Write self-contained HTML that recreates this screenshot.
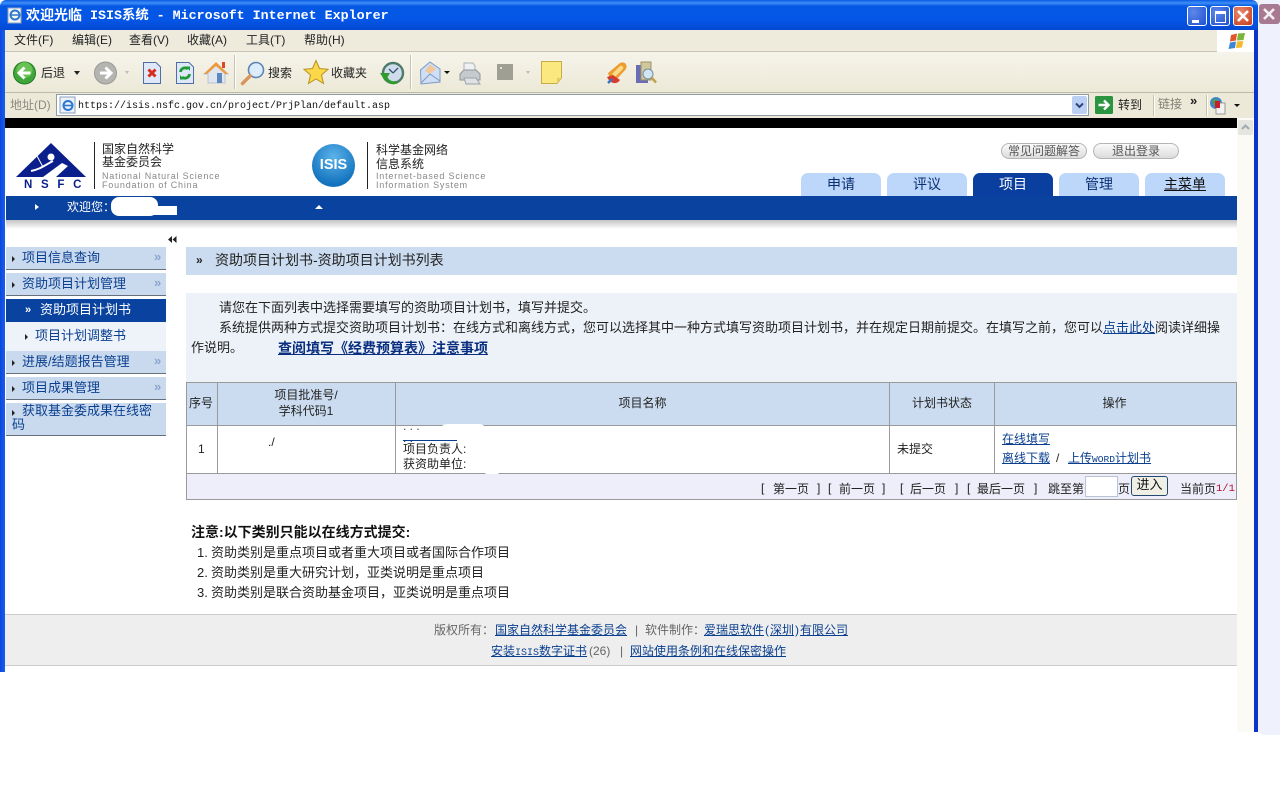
<!DOCTYPE html>
<html lang="zh"><head><meta charset="utf-8"><title>欢迎光临 ISIS系统</title>
<style>
html,body{margin:0;padding:0;width:1280px;height:800px;overflow:hidden;background:#fff}
body{position:relative;font-family:"Liberation Sans","WenQuanYi Zen Hei","Noto Sans CJK SC",sans-serif;font-size:13px;color:#222}
.a,.t{position:absolute}
.t{white-space:nowrap;line-height:16px}
a{color:#0a3f8f;text-decoration:underline}
.s{font-size:12px}
.m{font-family:"Liberation Mono",monospace;font-size:10px}
.p{display:inline-block;width:6px;text-align:center}
.side{position:absolute;left:6px;width:160px;background:#c9daee;border-bottom:1px solid #66707c;box-sizing:border-box;color:#0b3f90}
.side .t{color:#0b3f90}
.dbl{position:absolute;left:148px;color:#8aa6cc;font-size:13px;line-height:13px;font-weight:bold}
.tab{position:absolute;top:173px;width:80px;height:23px;background:#bdd7fb;border-radius:7px 7px 0 0;text-align:center;font-size:14px;line-height:23px;color:#0a2f70}
.c{position:absolute;background:#9a9a9a}
.pill{position:absolute;top:143px;width:86px;height:16px;border:1px solid #b5b5b5;border-radius:8px;box-sizing:border-box;background:linear-gradient(#fafafa,#dcdcdc);color:#555;font-size:12px;line-height:14px;text-align:center}
.gr{color:#888;font-size:9px;letter-spacing:.8px;line-height:9px}
.tri{position:absolute;width:0;height:0;border-style:solid;border-color:transparent}
.sep{position:absolute;width:1px;background:#c5c2b0;border-right:1px solid #fff}
</style></head><body>

<!-- right ghost area -->
<div class="a" style="left:1257px;top:0;width:23px;height:735px;background:#eff1fc"></div>
<div class="a" style="left:1259px;top:4px;width:21px;height:20px;background:#a87a92;border-radius:3px"></div>
<svg class="a" style="left:1259px;top:4px" width="21" height="20"><path d="M5 5L15 15M15 5L5 15" stroke="#f4eef2" stroke-width="2.6"/></svg>
<svg class="a" style="left:1240px;top:722px" width="40" height="30"><path d="M0 0L18 10L40 22V30H0Z" fill="#fff"/></svg>

<!-- window frame -->
<div class="a" style="left:0;top:0;width:1258px;height:30px;border-radius:6px 6px 0 0;background:linear-gradient(#0a5ae6 0,#3d8ff7 3px,#0458e4 6px,#0556e6 20px,#0348d2 30px)"></div>
<div class="a" style="left:0;top:30px;width:5px;height:642px;background:linear-gradient(90deg,#0a48dc,#1a5ef0)"></div>
<div class="a" style="left:1254px;top:30px;width:4px;height:702px;background:#0a35c8"></div>

<!-- title -->
<svg class="a" style="left:7px;top:7px" width="16" height="17"><rect x="1" y="1" width="13" height="15" fill="#f4f4f4" stroke="#8fa4bf"/><circle cx="8" cy="8" r="4.5" fill="none" stroke="#2e78cc" stroke-width="2"/><path d="M4 8h8" stroke="#2e78cc" stroke-width="1.5"/></svg>
<div class="t" style="left:26px;top:9px;color:#fff;font-size:14px;font-weight:bold;font-family:'Liberation Mono','WenQuanYi Zen Hei','Noto Sans CJK SC',monospace">欢迎光临&nbsp;</div>
<div class="t" style="left:90px;top:9px;color:#fff;font-size:13.33px;font-weight:bold;font-family:'Liberation Mono','WenQuanYi Zen Hei','Noto Sans CJK SC',monospace">ISIS系统 - Microsoft Internet Explorer</div>

<!-- window buttons -->
<div class="a" style="left:1187px;top:6px;width:18px;height:18px;border:1px solid #fff;border-radius:3px;background:radial-gradient(circle at 30% 30%,#5c88ea,#2050cf)"></div>
<div class="a" style="left:1192px;top:20px;width:7px;height:3px;background:#fff"></div>
<div class="a" style="left:1210px;top:6px;width:18px;height:18px;border:1px solid #fff;border-radius:3px;background:radial-gradient(circle at 30% 30%,#5c88ea,#2050cf)"></div>
<div class="a" style="left:1215px;top:11px;width:9px;height:8px;border:1px solid #fff;border-top:3px solid #fff"></div>
<div class="a" style="left:1233px;top:6px;width:18px;height:18px;border:1px solid #fff;border-radius:3px;background:radial-gradient(circle at 35% 30%,#e98a6e,#c7391a)"></div>
<svg class="a" style="left:1233px;top:6px" width="20" height="20"><path d="M5 5L15 15M15 5L5 15" stroke="#fff" stroke-width="2.6"/></svg>

<!-- menu bar -->
<div class="a" style="left:5px;top:30px;width:1249px;height:22px;background:#eeebdd;border-bottom:1px solid #c8c5b4;box-sizing:border-box"></div>
<div class="t s" style="left:14px;top:32px">文件(F)</div>
<div class="t s" style="left:72px;top:32px">编辑(E)</div>
<div class="t s" style="left:129px;top:32px">查看(V)</div>
<div class="t s" style="left:187px;top:32px">收藏(A)</div>
<div class="t s" style="left:246px;top:32px">工具(T)</div>
<div class="t s" style="left:304px;top:32px">帮助(H)</div>
<div class="a" style="left:1217px;top:30px;width:37px;height:22px;background:#fff"></div>
<svg class="a" style="left:1227px;top:31px" width="20" height="20"><path d="M4 4L10 2.5L9 9.5L3 10.5Z" fill="#e2552b"/><path d="M11 2.5L18 2L16.5 9L10 9.5Z" fill="#7cb53a"/><path d="M3 11.5L9 10.5L8 17L1.500 18Z" fill="#3d86d6"/><path d="M10 10.500L16.300 10L15 16.500L9 17Z" fill="#f3bb2c"/></svg>

<!-- toolbar -->
<div class="a" style="left:5px;top:52px;width:1249px;height:41px;background:linear-gradient(#f6f4ea,#ece9d8);border-bottom:1px solid #bdbaa9;box-sizing:border-box"></div>
<svg class="a" style="left:12px;top:60px" width="26" height="26"><circle cx="12.500" cy="13" r="11" fill="#3fa63a" stroke="#1e7a24"/><circle cx="12.500" cy="10" r="8" fill="#8ad86a" opacity=".55"/><path d="M18.500 13H8M12.500 7.500L7 13L12.500 18.500" fill="none" stroke="#fff" stroke-width="3"/></svg>
<div class="t s" style="left:41px;top:65px">后退</div>
<div class="tri" style="left:74px;top:71px;border-width:4px 3.500px 0;border-top-color:#222"></div>
<svg class="a" style="left:93px;top:60px" width="26" height="26"><circle cx="12.500" cy="13" r="11" fill="#b4b4b0" stroke="#9a9a96"/><path d="M7 13H17.500M12.500 7.500L18 13L12.500 18.500" fill="none" stroke="#fff" stroke-width="3"/></svg>
<div class="tri" style="left:125px;top:71px;border-width:3px 2.500px 0;border-top-color:#bbb"></div>
<svg class="a" style="left:142px;top:61px" width="20" height="24"><path d="M1.500 1.500H14L18.500 6V22.500H1.500Z" fill="#dfe8f8" stroke="#4f6ea8"/><path d="M6.500 8.500L13.500 15.500M13.500 8.500L6.500 15.500" stroke="#d92a20" stroke-width="3"/></svg>
<svg class="a" style="left:175px;top:61px" width="20" height="24"><path d="M1.500 1.500H14L18.500 6V22.500H1.500Z" fill="#dfe8f8" stroke="#4f6ea8"/><path d="M5.500 11A4.500 4.500 0 0 1 13 8M14.500 13A4.500 4.500 0 0 1 7 16" fill="none" stroke="#1f9a36" stroke-width="2.800"/><path d="M11 5.500L15 5.500V10ZM9 18.500L5 18.500V14Z" fill="#1f9a36"/></svg>
<svg class="a" style="left:203px;top:59px" width="26" height="26"><path d="M13 4L25 15H22V24H5V15H1Z" fill="#dfe6ef" stroke="#b9c3d0"/><path d="M1 15L13 3L25 15L22 15L13 7L4 15Z" fill="#ec9a3c"/><rect x="14" y="14" width="5" height="10" fill="#5b88c0"/><rect x="19" y="3" width="3" height="6" fill="#d9482b"/></svg>
<div class="sep" style="left:234px;top:55px;height:34px"></div>
<svg class="a" style="left:240px;top:60px" width="26" height="26"><circle cx="16" cy="10" r="7.500" fill="#dcecfb" stroke="#5d86b8" stroke-width="1.600"/><path d="M10 16L2.500 23.500" stroke="#d8975a" stroke-width="3.500" stroke-linecap="round"/></svg>
<div class="t s" style="left:268px;top:65px">搜索</div>
<svg class="a" style="left:303px;top:59px" width="26" height="26"><path d="M13 1.500L16.500 9.500L25 10.300L18.500 16L20.500 24.500L13 20L5.500 24.500L7.500 16L1 10.300L9.500 9.500Z" fill="#fbd84a" stroke="#b89220"/></svg>
<div class="t s" style="left:331px;top:65px">收藏夹</div>
<svg class="a" style="left:379px;top:60px" width="26" height="26"><circle cx="14" cy="13" r="10" fill="#cfdcec" stroke="#4d7a6c" stroke-width="2.400"/><path d="M14 13L19 8M14 13L10 9" stroke="#38506e" stroke-width="1.300"/><path d="M1 13L11 13L6 21Z" fill="#2f9a2e"/><path d="M7 17A8 8 0 0 0 18 22" fill="none" stroke="#2f9a2e" stroke-width="3"/></svg>
<div class="sep" style="left:410px;top:55px;height:34px"></div>
<svg class="a" style="left:419px;top:60px" width="24" height="25"><path d="M1.500 10L11 2L21 9V22L2 24Z" fill="#cfdef5" stroke="#7c9ac4"/><path d="M6 11L11 4.500L17 9L11 14Z" fill="#f2c89a"/><path d="M2 23L11 14L21 21" fill="none" stroke="#7c9ac4"/></svg>
<div class="tri" style="left:444px;top:71px;border-width:3.500px 3px 0;border-top-color:#111"></div>
<svg class="a" style="left:458px;top:60px" width="24" height="26"><path d="M6 3H15L17 6V11H6Z" fill="#eef0f2" stroke="#aab2b8"/><path d="M2 14L6 10H18L22 14V20H2Z" fill="#c6cacc" stroke="#8e969c"/><path d="M6 18L18 18L22 24H8Z" fill="#dfe2e4" stroke="#9aa2a8"/></svg>
<div class="a" style="left:497px;top:64px;width:16px;height:16px;background:#a09f94"></div>
<div class="a" style="left:500px;top:67px;width:2px;height:2px;background:#e5e3d8"></div>
<div class="tri" style="left:526px;top:71px;border-width:3px 2.500px 0;border-top-color:#bbb"></div>
<svg class="a" style="left:540px;top:60px" width="24" height="25"><path d="M1.500 1.500H21.500V18L17 23.500H1.500Z" fill="#fbe97f" stroke="#c9a94a"/><path d="M17 23.500V18H21.500Z" fill="#e8cc60"/></svg>
<svg class="a" style="left:605px;top:60px" width="24" height="26"><path d="M3 13L15 3C19 1 23 4 21 9L11 20L5 19Z" fill="#ef9c2f"/><path d="M7 14L15 6C17 5 19 7 18 9L10 17Z" fill="#f9dc8a"/><path d="M2 17C5 24 12 25 15 20L8 15Z" fill="#d63c2e"/><path d="M3 23L7 19" stroke="#3b72c4" stroke-width="2.500"/></svg>
<svg class="a" style="left:634px;top:60px" width="24" height="26"><rect x="2" y="5" width="12" height="18" fill="#6a6cb4"/><rect x="7" y="2" width="10" height="18" fill="#d0c79a" stroke="#9a9270"/><circle cx="14" cy="14" r="5" fill="#cfe6f5" stroke="#7a8a9a"/><path d="M17.500 17.500L22 22.500" stroke="#c2a24a" stroke-width="2.500"/></svg>

<!-- address bar -->
<div class="a" style="left:5px;top:93px;width:1249px;height:25px;background:#ece9d8"></div>
<div class="t s" style="left:10px;top:97px;color:#8c8a80">地址(D)</div>
<div class="a" style="left:56px;top:94px;width:1033px;height:22px;background:#fff;border:1px solid #8e9ca8;box-sizing:border-box"></div>
<svg class="a" style="left:59px;top:96px" width="18" height="18"><rect x="1" y="1" width="15" height="16" fill="#eaf1fa" stroke="#88a0c0"/><circle cx="9" cy="9.500" r="4.500" fill="none" stroke="#2c78d0" stroke-width="2"/><path d="M5 9.500h8" stroke="#2c78d0" stroke-width="1.600"/></svg>
<div class="t" style="left:78px;top:99px;font-family:'Liberation Mono',monospace;font-size:10px;color:#111">https://isis.nsfc.gov.cn/project/PrjPlan/default.asp</div>
<div class="a" style="left:1072px;top:96px;width:15px;height:18px;background:#bcd0f4;border-radius:2px"></div>
<svg class="a" style="left:1072px;top:96px" width="15" height="18"><path d="M4 7.500L7.500 11L11 7.500" fill="none" stroke="#30467a" stroke-width="2"/></svg>
<svg class="a" style="left:1095px;top:96px" width="18" height="18"><rect width="18" height="18" rx="1.500" fill="#2a9440"/><path d="M3.500 9H13M9 4.500L13.500 9L9 13.500" fill="none" stroke="#fff" stroke-width="2.400"/></svg>
<div class="t s" style="left:1118px;top:97px">转到</div>
<div class="sep" style="left:1153px;top:95px;height:21px"></div>
<div class="t s" style="left:1158px;top:96px;color:#807e74">链接</div>
<div class="t" style="left:1190px;top:93px;font-size:13px;font-weight:bold;color:#222">»</div>
<div class="sep" style="left:1206px;top:95px;height:21px"></div>
<svg class="a" style="left:1209px;top:96px" width="20" height="20"><circle cx="7" cy="7" r="6" fill="#3f86c8"/><path d="M3 4L8 3L9 8L5 10Z" fill="#4f9e50"/><rect x="7" y="7" width="9" height="11" fill="#f2f2f2" stroke="#999"/><rect x="6" y="5" width="5" height="7" fill="#c8202a"/></svg>
<div class="tri" style="left:1234px;top:104px;border-width:3.500px 3px 0;border-top-color:#111"></div>

<!-- black bar -->
<div class="a" style="left:5px;top:118px;width:1232px;height:10px;background:#000"></div>

<!-- scrollbar -->
<div class="a" style="left:1237px;top:118px;width:17px;height:614px;background:#fbfaf4"></div>
<div class="a" style="left:1238px;top:120px;width:15px;height:15px;background:#e6e6e0;border-radius:2px"></div>
<svg class="a" style="left:1238px;top:120px" width="15" height="15"><path d="M4 9L7.500 5.500L11 9" fill="none" stroke="#a0a8b0" stroke-width="2"/></svg>

<!-- header -->
<svg class="a" style="left:14px;top:141px" width="74" height="38"><path d="M37 2L72 36H2Z" fill="#0a1f8c"/><path d="M17 30C27 28 31 24 39 20" fill="none" stroke="#fff" stroke-width="2"/><circle cx="37" cy="16" r="3.500" fill="#fff"/><path d="M29 36L48 22L54 25L42 36Z" fill="#fff"/><path d="M23 15L29 26" stroke="#fff" stroke-width="1"/></svg>
<div class="t" style="left:24px;top:177px;font-size:11.500px;font-weight:bold;color:#0a1f8c;letter-spacing:8.700px">NSFC</div>
<div class="a" style="left:94px;top:142px;width:1px;height:47px;background:#222"></div>
<div class="t s" style="left:102px;top:141px">国家自然科学</div>
<div class="t s" style="left:102px;top:154px">基金委员会</div>
<div class="t gr" style="left:102px;top:172px">National Natural Science</div>
<div class="t gr" style="left:102px;top:181px">Foundation of China</div>
<div class="a" style="left:312px;top:144px;width:43px;height:43px;border-radius:50%;background:radial-gradient(circle at 50% 30%,#5cb2ea,#1272bd 75%)"></div>
<div class="t" style="left:312px;top:157px;width:43px;text-align:center;color:#fff;font-weight:bold;font-size:14.500px">ISIS</div>
<div class="a" style="left:367px;top:142px;width:1px;height:47px;background:#222"></div>
<div class="t s" style="left:376px;top:142px">科学基金网络</div>
<div class="t s" style="left:376px;top:156px">信息系统</div>
<div class="t gr" style="left:376px;top:172px">Internet-based Science</div>
<div class="t gr" style="left:376px;top:181px">Information System</div>

<div class="pill" style="left:1001px">常见问题解答</div>
<div class="pill" style="left:1093px">退出登录</div>

<div class="tab" style="left:801px">申请</div>
<div class="tab" style="left:887px">评议</div>
<div class="tab" style="left:973px;background:#0a3f9f;color:#fff">项目</div>
<div class="tab" style="left:1059px">管理</div>
<div class="tab" style="left:1145px"><span style="text-decoration:underline;color:#111">主菜单</span></div>

<div class="a" style="left:6px;top:196px;width:1231px;height:24px;background:#0a429f"></div>
<div class="a" style="left:6px;top:220px;width:1231px;height:9px;background:linear-gradient(#c4c4c4,#fff)"></div>
<div class="tri" style="left:35px;top:204px;border-width:3px 0 3px 4px;border-left-color:#fff"></div>
<div class="t s" style="left:67px;top:199px;color:#fff">欢迎您：</div>
<div class="a" style="left:111px;top:197px;width:47px;height:19px;background:#fff;border-radius:8px"></div>
<div class="a" style="left:130px;top:206px;width:47px;height:9px;background:#fff"></div>
<div class="tri" style="left:315px;top:205px;border-width:0 4.500px 4px;border-bottom-color:#fff"></div>

<!-- sidebar -->
<svg class="a" style="left:167px;top:235px" width="10" height="9"><path d="M5 1L1 4.500L5 8ZM9.500 1L5.500 4.500L9.500 8Z" fill="#222"/></svg>

<div class="side" style="top:247px;height:23px"><div class="tri" style="left:6px;top:9px;border-width:3px 0 3px 3px;border-left-color:#222"></div><div class="t" style="left:16px;top:3px">项目信息查询</div><div class="dbl" style="top:3px">»</div></div>
<div class="side" style="top:273px;height:23px"><div class="tri" style="left:6px;top:9px;border-width:3px 0 3px 3px;border-left-color:#222"></div><div class="t" style="left:16px;top:3px">资助项目计划管理</div><div class="dbl" style="top:3px">»</div></div>
<div class="a" style="left:6px;top:299px;width:160px;height:23px;background:#0a429f"></div>
<div class="t" style="left:25px;top:302px;color:#fff;font-size:11px;font-weight:bold">»</div>
<div class="t" style="left:40px;top:302px;color:#fff">资助项目计划书</div>
<div class="a" style="left:6px;top:322px;width:160px;height:29px;background:#eef3f9"></div>
<div class="tri" style="left:25px;top:334px;border-width:3px 0 3px 3px;border-left-color:#222"></div>
<div class="t" style="left:35px;top:328px;color:#0b3f90">项目计划调整书</div>
<div class="side" style="top:351px;height:23px"><div class="tri" style="left:6px;top:9px;border-width:3px 0 3px 3px;border-left-color:#222"></div><div class="t" style="left:16px;top:3px">进展/结题报告管理</div><div class="dbl" style="top:3px">»</div></div>
<div class="side" style="top:377px;height:23px"><div class="tri" style="left:6px;top:9px;border-width:3px 0 3px 3px;border-left-color:#222"></div><div class="t" style="left:16px;top:3px">项目成果管理</div><div class="dbl" style="top:3px">»</div></div>
<div class="side" style="top:403px;height:33px"><div class="tri" style="left:6px;top:7px;border-width:3px 0 3px 3px;border-left-color:#222"></div><div class="t" style="left:16px;top:1px;line-height:14px">获取基金委成果在线密</div><div class="t" style="left:6px;top:15px;line-height:14px">码</div></div>

<!-- main title -->
<div class="a" style="left:186px;top:247px;width:1051px;height:28px;background:#cbdcf0"></div>
<div class="t" style="left:196px;top:252px;font-size:12px;font-weight:bold;color:#222">»</div>
<div class="t" style="left:215px;top:252px;font-size:14px;color:#222">资助项目计划书-资助项目计划书列表</div>

<!-- note box -->
<div class="a" style="left:186px;top:293px;width:1051px;height:89px;background:#edf2f8"></div>
<div class="t" style="left:219px;top:300px">请您在下面列表中选择需要填写的资助项目计划书，填写并提交。</div>
<div class="t" style="left:219px;top:320px">系统提供两种方式提交资助项目计划书：在线方式和离线方式，您可以选择其中一种方式填写资助项目计划书，并在规定日期前提交。在填写之前，您可以<a href="#">点击此处</a>阅读详细操</div>
<div class="t" style="left:191px;top:340px">作说明。</div>
<div class="t" style="left:278px;top:340px;font-weight:bold;font-size:14px"><a href="#" style="color:#0a2f80">查阅填写《经费预算表》注意事项</a></div>

<!-- table -->
<div class="a" style="left:186px;top:382px;width:1051px;height:44px;background:#cbdcf0"></div>
<div class="a" style="left:186px;top:473px;width:1051px;height:26px;background:#eeeefb"></div>
<div class="c" style="left:186px;top:382px;width:1051px;height:1px"></div>
<div class="c" style="left:186px;top:425px;width:1051px;height:1px"></div>
<div class="c" style="left:186px;top:473px;width:1051px;height:1px"></div>
<div class="c" style="left:186px;top:499px;width:1051px;height:1px"></div>
<div class="c" style="left:186px;top:382px;width:1px;height:117px"></div>
<div class="c" style="left:1236px;top:382px;width:1px;height:117px"></div>
<div class="c" style="left:217px;top:382px;width:1px;height:91px"></div>
<div class="c" style="left:395px;top:382px;width:1px;height:91px"></div>
<div class="c" style="left:889px;top:382px;width:1px;height:91px"></div>
<div class="c" style="left:994px;top:382px;width:1px;height:91px"></div>

<div class="t s" style="left:189px;top:395px">序号</div>
<div class="t s" style="left:218px;top:387px;width:176px;text-align:center">项目批准号/</div>
<div class="t s" style="left:218px;top:403px;width:176px;text-align:center">学科代码1</div>
<div class="t s" style="left:396px;top:395px;width:493px;text-align:center">项目名称</div>
<div class="t s" style="left:890px;top:395px;width:104px;text-align:center">计划书状态</div>
<div class="t s" style="left:995px;top:395px;width:239px;text-align:center">操作</div>

<div class="t s" style="left:198px;top:441px">1</div>
<div class="t s" style="left:268px;top:434px">./</div>
<div class="t s" style="left:403px;top:418px;color:#444">. . .</div>
<div class="a" style="left:403px;top:440px;width:54px;height:1px;background:#0a3f8f"></div>
<div class="t s" style="left:403px;top:430px;color:#0a3f8f">. .</div>
<div class="t s" style="left:403px;top:441px">项目负责人:</div>
<div class="t s" style="left:403px;top:456px">获资助单位:</div>
<div class="t s" style="left:897px;top:441px">未提交</div>
<div class="t s" style="left:1002px;top:431px"><a href="#">在线填写</a></div>
<div class="t s" style="left:1002px;top:450px"><a href="#">离线下载</a></div>
<div class="t s" style="left:1056px;top:450px">/</div>
<div class="t s" style="left:1068px;top:450px"><a href="#">上传<span class="m" style="font-size:9.600px">WORD</span>计划书</a></div>

<div class="t s" style="left:761px;top:480px">[</div><div class="t s" style="left:773px;top:481px">第一页</div><div class="t s" style="left:817px;top:480px">]</div>
<div class="t s" style="left:828px;top:480px">[</div><div class="t s" style="left:839px;top:481px">前一页</div><div class="t s" style="left:882px;top:480px">]</div>
<div class="t s" style="left:900px;top:480px">[</div><div class="t s" style="left:910px;top:481px">后一页</div><div class="t s" style="left:955px;top:480px">]</div>
<div class="t s" style="left:967px;top:480px">[</div><div class="t s" style="left:977px;top:481px">最后一页</div><div class="t s" style="left:1034px;top:480px">]</div>
<div class="t s" style="left:1048px;top:481px">跳至第</div>
<div class="a" style="left:1085px;top:476px;width:33px;height:21px;background:#fff;border:1px solid #b8c4d4;box-sizing:border-box"></div>
<div class="t s" style="left:1118px;top:481px">页</div>
<div class="a" style="left:1131px;top:476px;width:37px;height:20px;background:#f0efe6;border:1px solid #234a6e;border-radius:3px;box-sizing:border-box;text-align:center;font-size:13px;line-height:15px;color:#111">进入</div>
<div class="t s" style="left:1180px;top:481px">当前页</div>
<div class="t m" style="left:1216px;top:481px;color:#b01030;font-size:10.500px">1/1</div>

<!-- notes -->
<div class="t" style="left:191px;top:524px;font-weight:bold;color:#111;font-size:14px">注意:以下类别只能以在线方式提交:</div>
<div class="t" style="left:197px;top:545px"><span style="display:inline-block;width:14px">1.</span>资助类别是重点项目或者重大项目或者国际合作项目</div>
<div class="t" style="left:197px;top:565px"><span style="display:inline-block;width:14px">2.</span>资助类别是重大研究计划，亚类说明是重点项目</div>
<div class="t" style="left:197px;top:585px"><span style="display:inline-block;width:14px">3.</span>资助类别是联合资助基金项目，亚类说明是重点项目</div>

<!-- footer -->
<div class="a" style="left:5px;top:614px;width:1232px;height:52px;background:#eee;border-top:1px solid #ccc;border-bottom:1px solid #ccc;box-sizing:border-box"></div>
<div class="t s" style="left:434px;top:622px;color:#666">版权所有：</div>
<div class="t s" style="left:495px;top:622px"><a href="#">国家自然科学基金委员会</a></div>
<div class="t s" style="left:635px;top:622px;color:#666">|</div>
<div class="t s" style="left:645px;top:622px;color:#666">软件制作：</div>
<div class="t s" style="left:704px;top:622px"><a href="#">爱瑞思软件<span class="p">(</span>深圳<span class="p">)</span>有限公司</a></div>
<div class="t s" style="left:491px;top:643px"><a href="#">安装<span class="m">ISIS</span>数字证书</a></div>
<div class="t s" style="left:589px;top:643px;color:#666">(26)</div>
<div class="t s" style="left:620px;top:643px;color:#666">|</div>
<div class="t s" style="left:630px;top:643px"><a href="#">网站使用条例和在线保密操作</a></div>

<!-- redaction smudges -->
<div class="a" style="left:440px;top:424px;width:46px;height:14px;background:#fff;border-radius:8px"></div>
<div class="a" style="left:484px;top:468px;width:16px;height:6px;background:#fff;border-radius:3px"></div>
</body></html>
